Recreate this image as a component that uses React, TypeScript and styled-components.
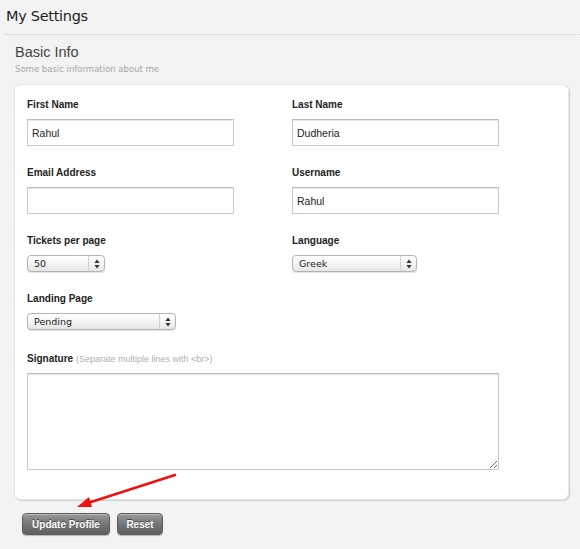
import React from "react";
import styled, { createGlobalStyle } from "styled-components";

const GlobalStyle = createGlobalStyle`
  html, body {
    margin: 0;
    padding: 0;
    background: #f3f3f3;
  }
  body {
    font-family: "Liberation Sans", Arial, sans-serif;
    color: #222;
  }
`;

const Page = styled.div`
  position: relative;
  width: 580px;
  height: 549px;
  overflow: hidden;
  background: #f3f3f3;
`;

const Header = styled.div`
  margin-left: 5px;
  padding: 5px 0 7px 1px;
  border-bottom: 1px dotted #cfcfcf;
`;

const Title = styled.h1`
  margin: 0;
  font-family: "DejaVu Sans", sans-serif;
  font-size: 14.5px;
  font-weight: normal;
  line-height: 22px;
  color: #1e1e1e;
  letter-spacing: -0.3px;
`;

const Section = styled.div`
  padding: 8px 11px 0 14px;
`;

const SectionTitle = styled.h2`
  margin: 0 0 0 1px;
  font-family: "Liberation Sans", Arial, sans-serif;
  font-size: 14.5px;
  font-weight: normal;
  line-height: 18px;
  color: #444;
`;

const SectionHint = styled.p`
  margin: 2px 0 0 1px;
  font-family: "DejaVu Sans", sans-serif;
  font-size: 8.5px;
  line-height: 12px;
  color: #a8a8a8;
`;

const Card = styled.div`
  margin-top: 9px;
  height: 416px;
  box-sizing: border-box;
  padding: 14px 12px 0 12px;
  background: #fff;
  border: 1px solid #e6e6e6;
  border-radius: 7px;
  box-shadow: 1px 1px 1px #cfcfcf;
`;

const Grid = styled.div`
  display: grid;
  grid-template-columns: 265px 265px;
  row-gap: 21px;
`;

const Field = styled.div<{ $wide?: boolean; $push?: number }>`
  display: flex;
  flex-direction: column;
  align-items: flex-start;
  grid-column: ${(p) => (p.$wide ? "1 / span 2" : "auto")};
  margin-top: ${(p) => p.$push ?? 0}px;
`;

const Label = styled.label`
  font-family: "Liberation Sans", Arial, sans-serif;
  font-size: 10px;
  font-weight: bold;
  line-height: 12px;
  color: #222;
  margin-bottom: 8px;
`;

const Hint = styled.span`
  font-weight: normal;
  color: #b0b0b0;
  font-size: 9px;
`;

const TextInput = styled.input`
  box-sizing: border-box;
  width: 207px;
  height: 27px;
  padding: 0 4px;
  border: 1px solid #c9c9c9;
  border-top-color: #bdbdbd;
  box-shadow: inset 0 1px 1px #e6e6e6;
  font-family: "Liberation Sans", Arial, sans-serif;
  font-size: 10.5px;
  color: #222;
  outline: none;
`;

const TextArea = styled.textarea`
  box-sizing: border-box;
  width: 472px;
  height: 97px;
  border: 1px solid #c9c9c9;
  border-top-color: #bdbdbd;
  box-shadow: inset 0 1px 1px #e6e6e6;
  outline: none;
  margin: 0;
`;

const SelectBox = styled.div<{ $width: number }>`
  box-sizing: border-box;
  display: flex;
  width: ${(p) => p.$width}px;
  height: 17px;
  border: 1px solid #b4b4b4;
  border-radius: 4px;
  background: linear-gradient(#ffffff, #f4f4f4 50%, #e6e6e6);
  box-shadow: 0 1px 1px rgba(0, 0, 0, 0.12);
  overflow: hidden;
`;

const Select = styled.select`
  flex: 1;
  appearance: none;
  -webkit-appearance: none;
  border: none;
  background: transparent;
  padding: 0 0 0 6px;
  margin: 0;
  font-family: "DejaVu Sans", sans-serif;
  font-size: 9.5px;
  color: #222;
  outline: none;
`;

const Arrows = styled.span`
  width: 15px;
  display: flex;
  align-items: center;
  justify-content: center;
  border-left: 1px solid #d0d0d0;
`;

const Buttons = styled.div`
  display: flex;
  gap: 7px;
  margin: 13px 0 0 8px;
`;

const Button = styled.button<{ $width: number }>`
  width: ${(p) => p.$width}px;
  height: 22px;
  padding: 0;
  border: 1px solid #5e5e5e;
  border-radius: 4px;
  background: linear-gradient(#9a9a9a, #767676 50%, #5f5f5f);
  box-shadow: inset 0 1px 0 rgba(255, 255, 255, 0.3), 0 1px 1px rgba(0, 0, 0, 0.25);
  color: #fff;
  font-family: "Liberation Sans", Arial, sans-serif;
  font-size: 10px;
  font-weight: bold;
  text-shadow: 0 -1px 0 #444;
`;

const Annotation = styled.svg`
  position: absolute;
  left: 0;
  top: 0;
  pointer-events: none;
`;

const UpDown = () => (
  <svg width="6" height="10" viewBox="0 0 6 10">
    <path d="M3 0.5 L5.6 4 H0.4 Z" fill="#333" />
    <path d="M3 9.5 L5.6 6 H0.4 Z" fill="#333" />
  </svg>
);

const Dropdown: React.FC<{ width: number; value: string }> = ({ width, value }) => (
  <SelectBox $width={width}>
    <Select defaultValue={value}>
      <option>{value}</option>
    </Select>
    <Arrows>
      <UpDown />
    </Arrows>
  </SelectBox>
);

export default function App() {
  return (
    <Page>
      <GlobalStyle />
      <Header>
        <Title>My Settings</Title>
      </Header>
      <Section>
        <SectionTitle>Basic Info</SectionTitle>
        <SectionHint>Some basic information about me</SectionHint>
        <Card>
          <Grid>
            <Field>
              <Label>First Name</Label>
              <TextInput defaultValue="Rahul" />
            </Field>
            <Field>
              <Label>Last Name</Label>
              <TextInput defaultValue="Dudheria" />
            </Field>
            <Field>
              <Label>Email Address</Label>
              <TextInput defaultValue="" />
            </Field>
            <Field>
              <Label>Username</Label>
              <TextInput defaultValue="Rahul" />
            </Field>
            <Field>
              <Label>Tickets per page</Label>
              <Dropdown width={78} value="50" />
            </Field>
            <Field>
              <Label>Language</Label>
              <Dropdown width={125} value="Greek" />
            </Field>
            <Field $wide>
              <Label>Landing Page</Label>
              <Dropdown width={149} value="Pending" />
            </Field>
            <Field $wide $push={2}>
              <Label>
                Signature <Hint>(Separate multiple lines with &lt;br&gt;)</Hint>
              </Label>
              <TextArea />
            </Field>
          </Grid>
        </Card>
        <Buttons>
          <Button $width={88}>Update Profile</Button>
          <Button $width={46}>Reset</Button>
        </Buttons>
      </Section>
      <Annotation width="580" height="549" viewBox="0 0 580 549">
        <line x1="175" y1="475" x2="88" y2="503" stroke="#ee1111" strokeWidth="2.6" strokeLinecap="round" />
        <path d="M77 507 L89 497 L92 507 Z" fill="#ee1111" />
      </Annotation>
    </Page>
  );
}
